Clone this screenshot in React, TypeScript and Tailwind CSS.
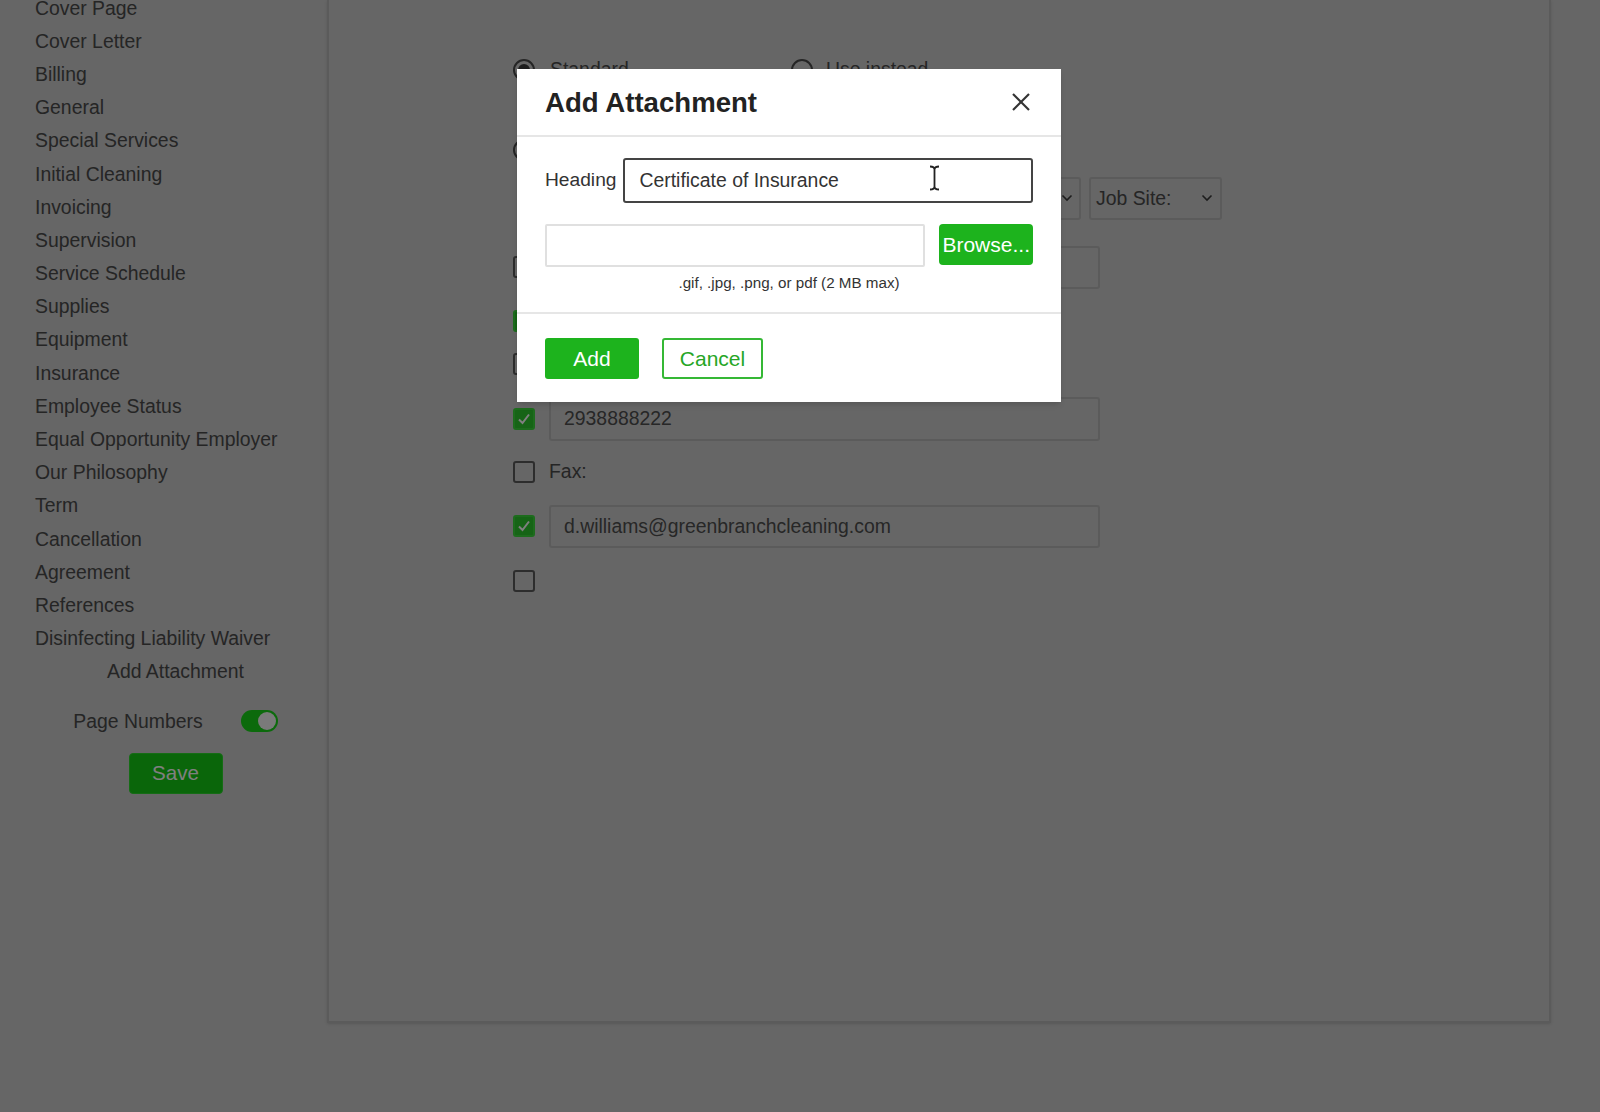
import React from "react";

const sections = [
  "Cover Page",
  "Cover Letter",
  "Billing",
  "General",
  "Special Services",
  "Initial Cleaning",
  "Invoicing",
  "Supervision",
  "Service Schedule",
  "Supplies",
  "Equipment",
  "Insurance",
  "Employee Status",
  "Equal Opportunity Employer",
  "Our Philosophy",
  "Term",
  "Cancellation",
  "Agreement",
  "References",
  "Disinfecting Liability Waiver",
];

function Chevron() {
  return (
    <svg width="12" height="8" viewBox="0 0 12 8" fill="none">
      <polyline points="1.5,1.5 6,6 10.5,1.5" stroke="#3a3a3a" strokeWidth="1.6" />
    </svg>
  );
}

function Checkbox({ checked }: { checked?: boolean }) {
  if (checked)
    return (
      <span className="flex h-[22px] w-[22px] shrink-0 items-center justify-center rounded-[3px] border-2 border-[#3ad83a] bg-[#2cc82c]">
        <svg width="14" height="14" viewBox="0 0 14 14" fill="none">
          <polyline points="2,7.5 5.5,11 12,2.5" stroke="#ffffff" strokeWidth="2" />
        </svg>
      </span>
    );
  return <span className="block h-[22px] w-[22px] shrink-0 rounded-[3px] border-2 border-[#5a5a5a]" />;
}

function Radio({ on }: { on?: boolean }) {
  return (
    <span className="flex h-[22px] w-[22px] shrink-0 items-center justify-center rounded-full border-2 border-[#4a4a4a]">
      {on && <span className="block h-[12px] w-[12px] rounded-full bg-[#3a3a3a]" />}
    </span>
  );
}

function Field({ value }: { value?: string }) {
  return (
    <div className="flex h-full w-[551px] items-center rounded-[3px] border-2 border-[#b6b6b6] bg-[#cdcdcd] pl-[13px] text-[19.4px] text-[#4e4e4e]">
      {value}
    </div>
  );
}

export default function App() {
  return (
    <div className="relative h-[1112px] w-[1600px] overflow-hidden bg-[#cccccc] font-['Liberation_Sans',Arial,sans-serif]">
      <div className="flex items-start">
        <aside className="w-[327px] shrink-0 pl-[35px] pr-[11px]">
          <ul className="-mt-[8.4px] text-[19.4px] text-[#4a4a4a]">
            {sections.map(s => (
              <li key={s} className="h-[33.2px] whitespace-nowrap leading-[33.2px]">{s}</li>
            ))}
            <li className="h-[33.2px] text-center leading-[33.2px]">Add Attachment</li>
          </ul>
          <div className="mt-[21.5px] flex h-[22px] items-center justify-center gap-[38px] text-[19.4px] text-[#4a4a4a]">
            <span>Page Numbers</span>
            <span className="flex h-[22px] w-[37px] items-center justify-end rounded-full bg-[#18d418] pr-[2px]">
              <span className="block h-[18px] w-[18px] rounded-full bg-[#f4f4f4]" />
            </span>
          </div>
          <button className="mx-auto mt-[20.5px] block h-[41px] w-[94px] rounded-[4px] border border-[#2ad82a] bg-[#14cc14] text-[20.6px] text-white">
            Save
          </button>
        </aside>

        <main className="h-[1023px] w-[1224px] shrink-0 border-x-2 border-b-2 border-[#b6b6b6] pl-[184px] pt-[52px] shadow-sm">
          <div className="flex h-[36px] items-center text-[19.4px] text-[#4a4a4a]">
            <label className="flex w-[278px] items-center gap-[15px]"><Radio on />Standard</label>
            <label className="flex items-center gap-[13px]"><Radio />Use instead</label>
          </div>
          <div className="mt-[44px] flex h-[36px] items-center">
            <Radio />
          </div>
          <div className="mt-[8.7px] flex h-[43.3px] gap-[8px] pl-[36px] text-[19.4px] text-[#4a4a4a]">
            <div className="flex w-[532px] items-center justify-end rounded-[3px] border-2 border-[#b6b6b6] pr-[6px]">
              <Chevron />
            </div>
            <div className="flex w-[133px] items-center justify-between rounded-[3px] border-2 border-[#b6b6b6] pl-[5px] pr-[7px]">
              <span>Job Site:</span><Chevron />
            </div>
          </div>

          <div className="mt-[26px] flex h-[43px] items-center gap-[14px]"><Checkbox /><Field /></div>
          <div className="mt-[21px] flex h-[22px] items-center"><Checkbox checked /></div>
          <div className="mt-[21px] flex h-[22px] items-center"><Checkbox /></div>
          <div className="mt-[22px] flex h-[44px] items-center gap-[14px]"><Checkbox checked /><Field value="2938888222" /></div>
          <div className="mt-[20px] flex h-[22px] items-center gap-[14px] text-[19.4px] text-[#4a4a4a]"><Checkbox />Fax:</div>
          <div className="mt-[22px] flex h-[43px] items-center gap-[14px]"><Checkbox checked /><Field value="d.williams@greenbranchcleaning.com" /></div>
          <div className="mt-[22px] flex h-[22px] items-center"><Checkbox /></div>
        </main>
      </div>

      <div className="absolute inset-0 bg-black/50" />

      <div className="absolute left-[517px] top-[69.4px] w-[544px] bg-white shadow-md">
        <div className="flex h-[68px] items-center justify-between border-b-2 border-[#e6e6e6] pl-[28px] pr-[30px]">
          <h2 className="text-[27.6px] font-bold text-[#222222]">Add Attachment</h2>
          <svg width="20" height="20" viewBox="0 0 20 20" fill="none">
            <line x1="2" y1="2" x2="18" y2="18" stroke="#333333" strokeWidth="2.2" />
            <line x1="18" y1="2" x2="2" y2="18" stroke="#333333" strokeWidth="2.2" />
          </svg>
        </div>
        <div className="px-[28px] pb-[21px] pt-[20.6px]">
          <div className="flex h-[45px] items-center gap-[7px]">
            <span className="text-[19.2px] text-[#333333]">Heading</span>
            <div className="flex h-full flex-1 items-center rounded-[3px] border-2 border-[#444444] pl-[14px] text-[19.4px] text-[#333333]">
              Certificate of Insurance
            </div>
          </div>
          <div className="mt-[21.5px] flex items-start gap-[14.5px]">
            <div className="h-[43px] flex-1 rounded-[2px] border-2 border-[#e0e0e0]" />
            <button className="h-[40.5px] w-[93.6px] rounded-[4px] bg-[#1db31d] text-[21px] text-white">Browse...</button>
          </div>
          <p className="mt-[6.5px] text-center text-[15.2px] leading-[17px] text-[#333333]">.gif, .jpg, .png, or pdf (2 MB max)</p>
        </div>
        <div className="flex gap-[23px] border-t-2 border-[#e6e6e6] px-[28px] pb-[23.4px] pt-[24px]">
          <button className="h-[40.6px] w-[94px] rounded-[3px] bg-[#1db31d] text-[21px] text-white">Add</button>
          <button className="h-[40.6px] w-[101px] rounded-[3px] border-2 border-[#35b835] bg-white text-[21px] text-[#26a626]">Cancel</button>
        </div>
      </div>

      <svg className="absolute left-[928px] top-[165px]" width="13" height="26" viewBox="0 0 13 26" fill="none">
        <path d="M2 1.5 C4.5 1.5 6.5 2 6.5 4.5 C6.5 2 8.5 1.5 11 1.5 M6.5 4.5 V21.5 M2 24.5 C4.5 24.5 6.5 24 6.5 21.5 C6.5 24 8.5 24.5 11 24.5" stroke="#ffffff" strokeWidth="3.4" />
        <path d="M2 1.5 C4.5 1.5 6.5 2 6.5 4.5 C6.5 2 8.5 1.5 11 1.5 M6.5 4.5 V21.5 M2 24.5 C4.5 24.5 6.5 24 6.5 21.5 C6.5 24 8.5 24.5 11 24.5" stroke="#222222" strokeWidth="1.8" />
      </svg>
    </div>
  );
}
